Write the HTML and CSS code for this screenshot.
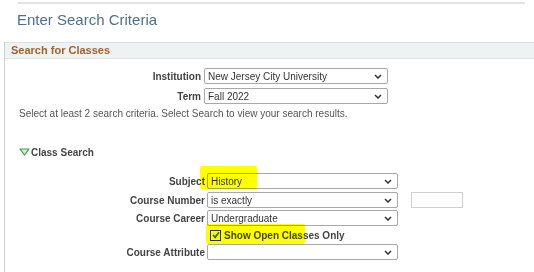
FILE: index.html
```html
<!DOCTYPE html>
<html>
<head>
<meta charset="utf-8">
<link rel="stylesheet" href="styles.css">
</head>
<body>
<div class="topline"></div>
<h1 class="title">Enter Search Criteria</h1>
<div class="panel">
  <div class="panel-head">Search for Classes</div>
  <div class="panel-body">
    <div class="block1">
      <div class="row">
        <div class="label l1">Institution</div>
        <div class="sel s1"><span>New Jersey City University</span><svg class="chev" width="8" height="5" viewBox="0 0 8 5"><polyline points="1,1 4,4 7,1" fill="none" stroke="#333" stroke-width="1.5"/></svg></div>
      </div>
      <div class="row gap4">
        <div class="label l1">Term</div>
        <div class="sel s1"><span>Fall 2022</span><svg class="chev" width="8" height="5" viewBox="0 0 8 5"><polyline points="1,1 4,4 7,1" fill="none" stroke="#333" stroke-width="1.5"/></svg></div>
      </div>
    </div>
    <p class="desc">Select at least 2 search criteria. Select Search to view your search results.</p>
    <div class="section"><svg class="tri" width="11" height="8" viewBox="0 0 11 8"><polygon points="1,1 10,1 5.5,7" fill="#d6efd6" stroke="#3f9b3f" stroke-width="1.2" stroke-linejoin="round"/></svg><span>Class Search</span></div>
    <div class="block2">
      <div class="row">
        <div class="label l2">Subject</div>
        <div class="sel s2"><span>History</span><svg class="chev" width="8" height="5" viewBox="0 0 8 5"><polyline points="1,1 4,4 7,1" fill="none" stroke="#333" stroke-width="1.5"/></svg></div>
        <span class="hl hl-subject"></span>
      </div>
      <div class="row gap3">
        <div class="label l2">Course Number</div>
        <div class="sel s2"><span>is exactly</span><svg class="chev" width="8" height="5" viewBox="0 0 8 5"><polyline points="1,1 4,4 7,1" fill="none" stroke="#333" stroke-width="1.5"/></svg></div>
        <div class="textbox"></div>
      </div>
      <div class="row gap2">
        <div class="label l2">Course Career</div>
        <div class="sel s2"><span>Undergraduate</span><svg class="chev" width="8" height="5" viewBox="0 0 8 5"><polyline points="1,1 4,4 7,1" fill="none" stroke="#333" stroke-width="1.5"/></svg></div>
      </div>
      <div class="row checkrow">
        <div class="label l2"></div>
        <span class="cbox"><svg width="8" height="8" viewBox="0 0 8 8"><polyline points="1,4 3.2,6.3 7,1.3" fill="none" stroke="#1f7a1f" stroke-width="1.8"/></svg></span>
        <span class="cblabel">Show Open Classes Only</span>
        <span class="hl hl-check"></span>
      </div>
      <div class="row">
        <div class="label l2">Course Attribute</div>
        <div class="sel s2"><span></span><svg class="chev" width="8" height="5" viewBox="0 0 8 5"><polyline points="1,1 4,4 7,1" fill="none" stroke="#333" stroke-width="1.5"/></svg></div>
      </div>
    </div>
  </div>
</div>
</body>
</html>
```
FILE: styles.css
```css
html, body {
  margin: 0;
  padding: 0;
  background: #fff;
  font-family: "Liberation Sans", Arial, sans-serif;
  width: 534px;
  height: 272px;
  overflow: hidden;
}
.topline {
  margin: 2px 0 0 18px;
  width: 507px;
  height: 2px;
  background: #e2e2e2;
}
.title {
  margin: 6px 0 0 17px;
  font-size: 15px;
  font-weight: normal;
  line-height: 20px;
  color: #4f6f8f;
}
.panel {
  margin: 12px 0 0 4px;
  border-left: 1px solid #cfcfcf;
  height: 240px;
}
.panel-head {
  height: 15px;
  background: #eef2f2;
  border-top: 1px solid #dde3e3;
  border-bottom: 1px solid #dde3e3;
  color: #a5612a;
  font-size: 11px;
  font-weight: bold;
  line-height: 15px;
  padding-left: 6px;
}
.panel-body {
  padding-top: 9px;
}
.row {
  position: relative;
  display: flex;
  align-items: center;
  height: 16px;
}
.gap4 { margin-top: 4px; }
.gap3 { margin-top: 3px; }
.gap2 { margin-top: 2px; }
.label {
  box-sizing: border-box;
  text-align: right;
  font-size: 10px;
  font-weight: bold;
  color: #444;
  white-space: nowrap;
}
.l1 { width: 196px; margin-right: 3px; }
.l2 { width: 200px; margin-right: 2px; }
.sel {
  box-sizing: border-box;
  height: 16px;
  border: 1px solid #a8a8a8;
  border-radius: 2px;
  background: #fff;
  display: flex;
  align-items: center;
  justify-content: space-between;
  padding: 0 5px 0 3px;
  font-size: 10px;
  color: #333;
}
.s1 { width: 184px; }
.s2 { width: 191px; }
.chev { display: block; }
.textbox {
  box-sizing: border-box;
  margin-left: 13px;
  width: 52px;
  height: 16px;
  border: 1px solid #cfcfcf;
}
.desc {
  margin: 4px 0 0 14px;
  font-size: 10px;
  line-height: 12px;
  color: #555;
}
.section {
  display: flex;
  align-items: center;
  margin: 26px 0 0 14px;
  height: 12px;
  font-size: 10px;
  font-weight: bold;
  color: #454545;
}
.tri { display: block; margin-right: 1px; }
.block2 { margin-top: 15px; }
.checkrow {
  height: 18px;
}
.cbox {
  box-sizing: border-box;
  width: 11px;
  height: 11px;
  margin-left: 3px;
  border: 1px solid #333;
  background: #fff;
  display: flex;
  align-items: center;
  justify-content: center;
}
.cblabel {
  margin-left: 3px;
  font-size: 10px;
  font-weight: bold;
  color: #454545;
}
.hl {
  position: absolute;
  background: #ffff00;
  mix-blend-mode: multiply;
  border-radius: 2px;
}
.hl-subject {
  left: 195px;
  top: -7px;
  width: 57px;
  height: 23px;
}
.hl-check {
  left: 201px;
  top: -2px;
  width: 99px;
  height: 20px;
}
```
